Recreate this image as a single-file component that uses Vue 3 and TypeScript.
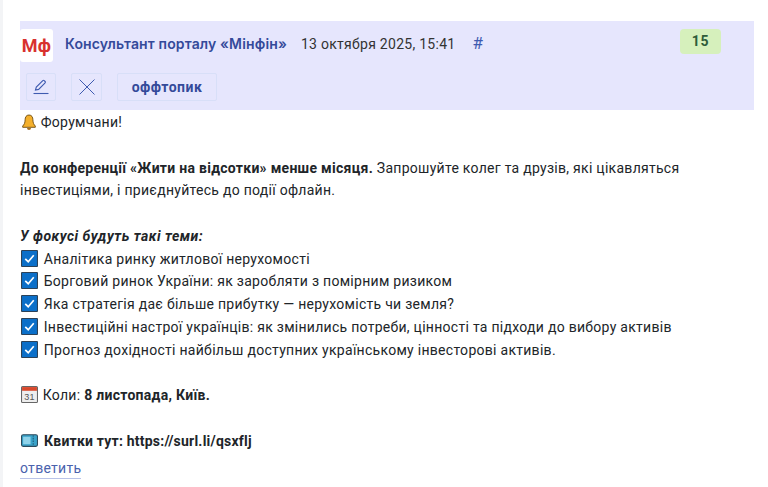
<script setup lang="ts">
const topics: string[] = [
  'Аналітика ринку житлової нерухомості',
  'Борговий ринок України: як заробляти з помірним ризиком',
  'Яка стратегія дає більше прибутку — нерухомість чи земля?',
  'Інвестиційні настрої українців: як змінились потреби, цінності та підходи до вибору активів',
  'Прогноз дохідності найбільш доступних українському інвесторові активів.',
]
</script>

<template>
  <div class="page">
    <article class="post">
      <header class="head">
        <div class="top">
          <div class="logo">Мф</div>
          <a class="author">Консультант порталу «Мінфін»</a>
          <span class="date">13 октября 2025, 15:41</span>
          <a class="hash">#</a>
          <span class="score">15</span>
        </div>
        <div class="tools">
          <button class="tool">
            <svg width="18" height="18" viewBox="0 0 18 18" fill="none" stroke="#3f5bb0" stroke-width="1.1">
              <path d="M3.500 12 4.300 9.100 10.800 2.600a1 1 0 0 1 1.400 0l.9.9a1 1 0 0 1 0 1.400L6.600 11.400z" />
              <path d="M1.500 15.500h15" />
            </svg>
          </button>
          <button class="tool wide">
            <svg width="18" height="18" viewBox="0 0 18 18" fill="none" stroke="#3f5bb0" stroke-width="1">
              <path d="M1.500 1.500 16.500 16.500M16.500 1.500 1.500 16.500" />
            </svg>
          </button>
          <button class="tag">оффтопик</button>
        </div>
      </header>
      <div class="body">
        <p>
          <svg class="emoji bell" viewBox="0 0 16 16">
            <path d="M8 1c-2.800 0-3.900 2.300-3.900 4.800 0 3.200-1 4.800-2.400 6.200v1.300h12.600V12c-1.400-1.400-2.400-3-2.400-6.200C11.900 3.300 10.800 1 8 1z" fill="#f4b02c" stroke="#6e4c12" stroke-width=".9" />
            <path d="M6 14a2 2 0 0 0 4 0z" fill="#a9701a" />
          </svg>
          Форумчани!
        </p>
        <p class="gap"><b>До конференції «Жити на відсотки» менше місяця.</b> Запрошуйте колег та друзів, які цікавляться інвестиціями, і приєднуйтесь до події офлайн.</p>
        <p class="gap"><b class="lead">У фокусі будуть такі теми:</b></p>
        <p v-for="topic in topics" :key="topic">
          <svg class="emoji check" viewBox="0 0 16 16">
            <rect x=".5" y=".5" width="15" height="15" rx=".5" fill="#0b6fc9" stroke="#2c4258" />
            <path d="M4 8.300 6.800 11 12 5" fill="none" stroke="#fff" stroke-width="1.600" />
          </svg>
          {{ topic }}
        </p>
        <p class="gap">
          <svg class="emoji cal" viewBox="0 0 16 16">
            <rect x=".5" y=".5" width="15" height="15" rx="1" fill="#eee" stroke="#666" />
            <rect x="1" y="1" width="14" height="3.500" fill="#d9482b" />
            <text x="8" y="13" font-size="8.500" text-anchor="middle" fill="#555" font-family="Liberation Sans">31</text>
          </svg>
          Коли: <b>8 листопада, Київ.</b>
        </p>
        <p class="gap">
          <svg class="emoji ticket" viewBox="0 0 16 16">
            <rect x=".5" y="2.500" width="15" height="11" rx="1.500" fill="#3aa3c9" stroke="#2c4a5c" />
            <rect x="2" y="4.500" width="7" height="7" fill="#8fd3ea" />
            <path d="M11.500 3v10" stroke="#1f5a78" stroke-dasharray="1.500 1" />
          </svg>
          <b class="link">Квитки тут: https://surl.li/qsxflj</b>
        </p>
        <a class="reply">ответить</a>
      </div>
    </article>
  </div>
</template>

<style>
html, body { margin: 0; background: #fff; }
</style>

<style scoped>
.page {
  height: 487px;
  overflow: hidden;
  padding: 21px 14px 0 17px;
  box-sizing: border-box;
  border-left: 3px solid #f3f4f6;
  font-family: Roboto, sans-serif;
  font-size: 14px;
  letter-spacing: .28px;
  line-height: 22.75px;
  color: #212529;
}
.head {
  background: #e6e6fd;
  height: 89px;
  padding-top: 8px;
  box-sizing: border-box;
  margin-bottom: 1px;
}
.top { display: flex; align-items: flex-start; }
.logo {
  width: 33px;
  height: 33px;
  background: #fff;
  border-radius: 3px;
  color: #d8322e;
  font: 700 18px/33px Roboto, sans-serif;
  text-align: center;
}
.author {
  margin: 4px 0 0 12px;
  color: #344a9a;
  font-family: Inter, sans-serif;
  font-size: 14px;
  font-weight: 600;
  letter-spacing: .14px;
}
.date { margin: 4px 0 0 14px; color: #333; }
.hash { margin: 3px 0 0 17px; color: #3f5bb0; font-size: 17px; }
.score {
  margin-left: auto;
  margin-right: 33px;
  width: 41px;
  height: 25px;
  background: #d6f0bc;
  border-radius: 4px;
  color: #2f5d3a;
  font-weight: 700;
  line-height: 25px;
  letter-spacing: .6px;
  text-align: center;
}
.tools { display: flex; gap: 15px; margin: 11px 0 0 6px; }
.tool, .tag {
  height: 28px;
  padding: 0;
  background: transparent;
  border: 1px solid #d8dff8;
  border-radius: 2px;
  display: flex;
  align-items: center;
  justify-content: center;
}
.tool { width: 30px; }
.tool.wide { width: 31px; }
.tag {
  width: 100px;
  color: #344a9a;
  font: 700 14px Roboto, sans-serif;
  letter-spacing: .5px;
}
p { margin: 0; }
.gap { margin-top: 22.75px; }
.lead { font-style: italic; letter-spacing: .5px; }
.link { letter-spacing: .22px; }
.emoji {
  width: 16px;
  height: 16px;
  vertical-align: -3px;
}
.bell { margin: 0 0 0 1px; }
.check { width: 17px; height: 17px; margin: 0 2px 0 1px; }
.cal { width: 17px; height: 17px; margin: 0 1px 0 1px; }
.ticket { width: 17px; height: 17px; margin: 0 6px 0 1px; }
.reply {
  display: inline-block;
  color: #4a62ad;
  line-height: 20px;
  margin-top: 6px;
  border-bottom: 1px solid #b9c3e8;
}
</style>
